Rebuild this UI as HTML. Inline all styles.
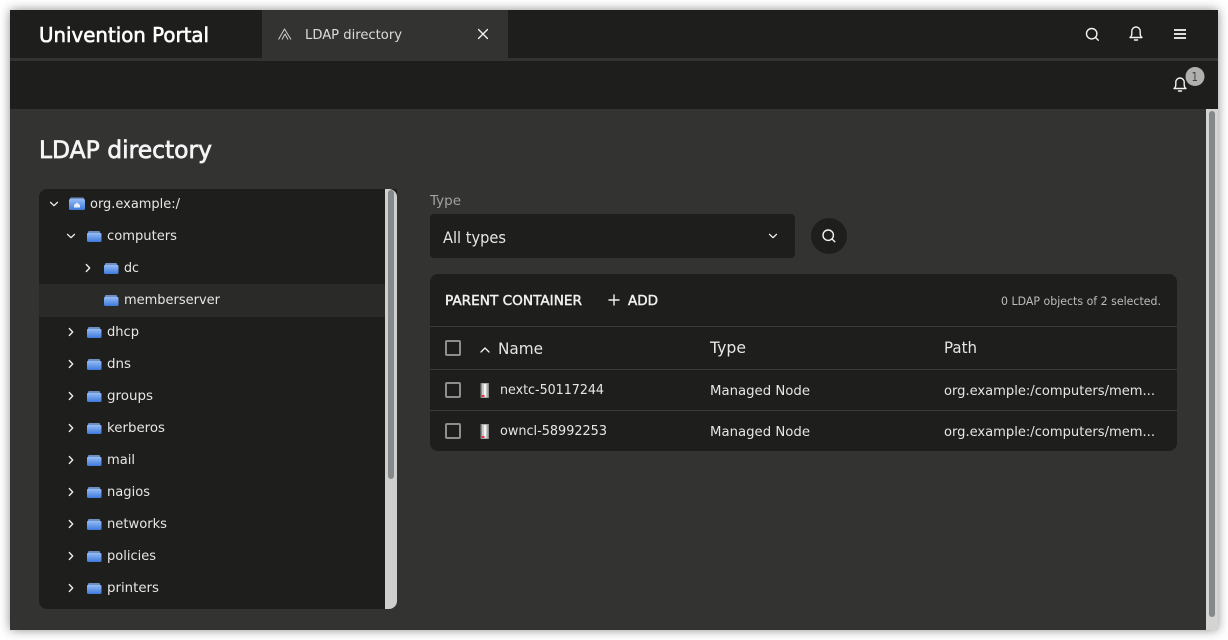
<!DOCTYPE html>
<html><head><meta charset="utf-8"><style>
html,body{margin:0;padding:0;background:#fff;width:1228px;height:640px;overflow:hidden}
#w{position:absolute;left:10px;top:10px;width:1208px;height:620px;box-shadow:0 0 10px rgba(0,0,0,.45)}
svg{position:absolute;left:0;top:0}
text{font-family:"DejaVu Sans",sans-serif;fill:#e6e6e6;font-size:13.700px}
.s{stroke-width:.45px}
.i{fill:none;stroke:#f2f2f2;stroke-width:1.4;stroke-linecap:round;stroke-linejoin:round}
</style></head><body><div id="w"></div>
<svg width="1228" height="640" viewBox="0 0 1228 640">
<defs>
<linearGradient id="f" x1="0" y1="0" x2="0" y2="1"><stop offset="0" stop-color="#94bcf5"/><stop offset="1" stop-color="#3e7adb"/></linearGradient>
<g id="fo"><path d="M1.500 1h11l1 2.500H.5z" fill="#6f8fbe"/><rect x="0" y="3" width="14.500" height="9" rx="1.200" fill="url(#f)"/></g>
<g id="ch"><path class="i" d="M-3.500-1.700 0 1.700 3.500-1.700" style="stroke-width:1.300"/></g>
<g id="cr"><path class="i" d="M-1.700-3.500 1.700 0-1.700 3.500" style="stroke-width:1.300"/></g>
<g id="cb"><rect x="446" y="0" width="14" height="14" rx="1" fill="none" stroke="#8e8e8a" stroke-width="2"/></g>
<g id="srv"><rect x="0" y="0" width="8.500" height="15" rx=".5" fill="#8c8c8c"/><rect x="1.500" y=".5" width="5.500" height="14" fill="#c8c8c8"/><rect x="3.500" y="1" width="2" height="13" fill="#f4f4f4"/><rect x="1" y="12" width="3" height="2" fill="#e8324a"/></g>
<g id="bell"><path class="i" d="M-6 4.500c1.300-1 1.800-2 1.800-3.800v-2.500a4.200 4.200 0 0 1 8.400 0v2.500c0 1.800.5 2.800 1.800 3.800z"/><path class="i" d="M-1.500 7h3"/></g>
<g id="mag"><circle cx="-.8" cy="-.8" r="5.200" class="i"/><path class="i" d="M3 3l2.800 2.800"/></g>
</defs>

<!-- base -->
<rect x="10" y="10" width="1208" height="620" fill="#333332"/>
<rect x="10" y="10" width="1208" height="99" fill="#1e1e1c"/>
<rect x="10" y="58" width="1208" height="3" fill="#333332"/>
<rect x="262" y="10" width="246" height="51" fill="#333332"/>

<!-- header -->
<text x="39" y="42" style="font-size:20px;fill:#fff;stroke:#fff;stroke-width:.6px" textLength="170" lengthAdjust="spacingAndGlyphs">Univention Portal</text>
<g fill="none" stroke="#cfcfcf" stroke-width="1" stroke-linejoin="round"><path d="M278.500 39.500 284.500 29 291 39.500"/><path d="M282 39.500 285 34 288 39.500"/></g>
<text x="305" y="39" textLength="97" lengthAdjust="spacingAndGlyphs" style="fill:#dcdcdc">LDAP directory</text>
<path class="i" d="M478.500 29.500l9 9M487.500 29.500l-9 9" style="stroke-width:1.300"/>
<use href="#mag" x="1092.500" y="34.500"/>
<use href="#bell" x="1136" y="33"/>
<path d="M1174 30h12M1174 34h12M1174 38h12" stroke="#dedede" stroke-width="2" fill="none"/>
<use href="#bell" x="1180" y="84"/>
<circle cx="1195" cy="76.500" r="9.500" fill="#b0b0ae"/>
<text x="1191.500" y="81" style="font-size:12px;fill:#444" textLength="6.500" lengthAdjust="spacingAndGlyphs">1</text>

<!-- title -->
<text x="39" y="158" style="font-size:24px;fill:#f5f5f5;stroke:#f5f5f5;stroke-width:.7px" textLength="173" lengthAdjust="spacingAndGlyphs">LDAP directory</text>

<!-- tree -->
<path d="M47 189H397V601a8 8 0 0 1-8 8H47a8 8 0 0 1-8-8V197a8 8 0 0 1 8-8z" fill="#1e1e1c"/>
<path d="M385 189h4a8 8 0 0 1 8 8v404a8 8 0 0 1-8 8h-4z" fill="#cfcfcd"/>
<rect x="388" y="190" width="6" height="289" rx="3" fill="#858989"/>
<rect x="39" y="284" width="346" height="33" fill="#2a2a29"/>

<use href="#ch" x="54" y="204"/>
<rect x="70" y="197.500" width="14" height="3" rx="1" fill="#6f8fbe"/>
<rect x="69" y="199" width="16" height="11" rx="1.500" fill="url(#f)"/>
<path d="M74 205l3-2.500 3 2.500v2.500h-6z" fill="#e6eefa"/>
<text x="90" y="208" textLength="90" lengthAdjust="spacingAndGlyphs">org.example:/</text>

<use href="#ch" x="71" y="236"/>
<use href="#fo" x="87" y="230"/>
<text x="107" y="240" textLength="70" lengthAdjust="spacingAndGlyphs">computers</text>

<use href="#cr" x="88" y="268"/>
<use href="#fo" x="104" y="262"/>
<text x="124" y="272" textLength="15" lengthAdjust="spacingAndGlyphs">dc</text>

<use href="#fo" x="104" y="294"/>
<text x="124" y="304" textLength="96" lengthAdjust="spacingAndGlyphs">memberserver</text>

<use href="#cr" x="71" y="332"/><use href="#fo" x="87" y="326"/>
<text x="107" y="336" textLength="32" lengthAdjust="spacingAndGlyphs">dhcp</text>
<use href="#cr" x="71" y="364"/><use href="#fo" x="87" y="358"/>
<text x="107" y="368" textLength="24" lengthAdjust="spacingAndGlyphs">dns</text>
<use href="#cr" x="71" y="396"/><use href="#fo" x="87" y="390"/>
<text x="107" y="400" textLength="46" lengthAdjust="spacingAndGlyphs">groups</text>
<use href="#cr" x="71" y="428"/><use href="#fo" x="87" y="422"/>
<text x="107" y="432" textLength="58" lengthAdjust="spacingAndGlyphs">kerberos</text>
<use href="#cr" x="71" y="460"/><use href="#fo" x="87" y="454"/>
<text x="107" y="464" textLength="28" lengthAdjust="spacingAndGlyphs">mail</text>
<use href="#cr" x="71" y="492"/><use href="#fo" x="87" y="486"/>
<text x="107" y="496" textLength="43" lengthAdjust="spacingAndGlyphs">nagios</text>
<use href="#cr" x="71" y="524"/><use href="#fo" x="87" y="518"/>
<text x="107" y="528" textLength="60" lengthAdjust="spacingAndGlyphs">networks</text>
<use href="#cr" x="71" y="556"/><use href="#fo" x="87" y="550"/>
<text x="107" y="560" textLength="49" lengthAdjust="spacingAndGlyphs">policies</text>
<use href="#cr" x="71" y="588"/><use href="#fo" x="87" y="582"/>
<text x="107" y="592" textLength="52" lengthAdjust="spacingAndGlyphs">printers</text>

<!-- filter -->
<text x="430" y="205" textLength="31" lengthAdjust="spacingAndGlyphs" style="fill:#a2a2a0">Type</text>
<rect x="430" y="214" width="365" height="44" rx="4" fill="#1e1e1c"/>
<text x="443" y="243" textLength="63" lengthAdjust="spacingAndGlyphs" style="font-size:15.700px">All types</text>
<use href="#ch" x="773" y="236"/>
<circle cx="829" cy="236" r="18" fill="#1e1e1c"/>
<use href="#mag" x="829" y="236"/>

<!-- table -->
<rect x="430" y="274" width="747" height="177" rx="8" fill="#1e1e1c"/>
<rect x="430" y="326" width="747" height="1" fill="#3a3a38"/>
<rect x="430" y="369" width="747" height="1" fill="#3a3a38"/>
<rect x="430" y="410" width="747" height="1" fill="#3a3a38"/>
<text x="445" y="305" textLength="137" lengthAdjust="spacingAndGlyphs" class="s" style="fill:#f0f0f0;stroke:#f0f0f0">PARENT CONTAINER</text>
<path class="i" d="M614 295v10M609 300h10"/>
<text x="628" y="305" textLength="30" lengthAdjust="spacingAndGlyphs" class="s" style="fill:#f0f0f0;stroke:#f0f0f0">ADD</text>
<text x="1001" y="305" textLength="160" lengthAdjust="spacingAndGlyphs" style="font-size:11.800px;fill:#bdbdbb">0 LDAP objects of 2 selected.</text>

<use href="#cb" y="341"/>
<path class="i" d="M481 352l4-4 4 4" style="stroke-width:1.300"/>
<text x="498" y="354" textLength="45" lengthAdjust="spacingAndGlyphs" style="font-size:15.700px">Name</text>
<text x="710" y="353" textLength="36" lengthAdjust="spacingAndGlyphs" style="font-size:15.700px">Type</text>
<text x="944" y="353" textLength="33" lengthAdjust="spacingAndGlyphs" style="font-size:15.700px">Path</text>

<use href="#cb" y="383"/>
<use href="#srv" x="480.500" y="383"/>
<text x="500" y="394" textLength="104" lengthAdjust="spacingAndGlyphs">nextc-50117244</text>
<text x="710" y="395" textLength="100" lengthAdjust="spacingAndGlyphs">Managed Node</text>
<text x="944" y="395" textLength="211" lengthAdjust="spacingAndGlyphs">org.example:/computers/mem...</text>

<use href="#cb" y="424"/>
<use href="#srv" x="480.500" y="424"/>
<text x="500" y="435" textLength="107" lengthAdjust="spacingAndGlyphs">owncl-58992253</text>
<text x="710" y="436" textLength="100" lengthAdjust="spacingAndGlyphs">Managed Node</text>
<text x="944" y="436" textLength="211" lengthAdjust="spacingAndGlyphs">org.example:/computers/mem...</text>

<!-- page scrollbar -->
<rect x="1206" y="109" width="12" height="521" fill="#d4d4d2"/>
<rect x="1209" y="111" width="6" height="506" rx="3" fill="#858989"/>
</svg>
</body></html>
